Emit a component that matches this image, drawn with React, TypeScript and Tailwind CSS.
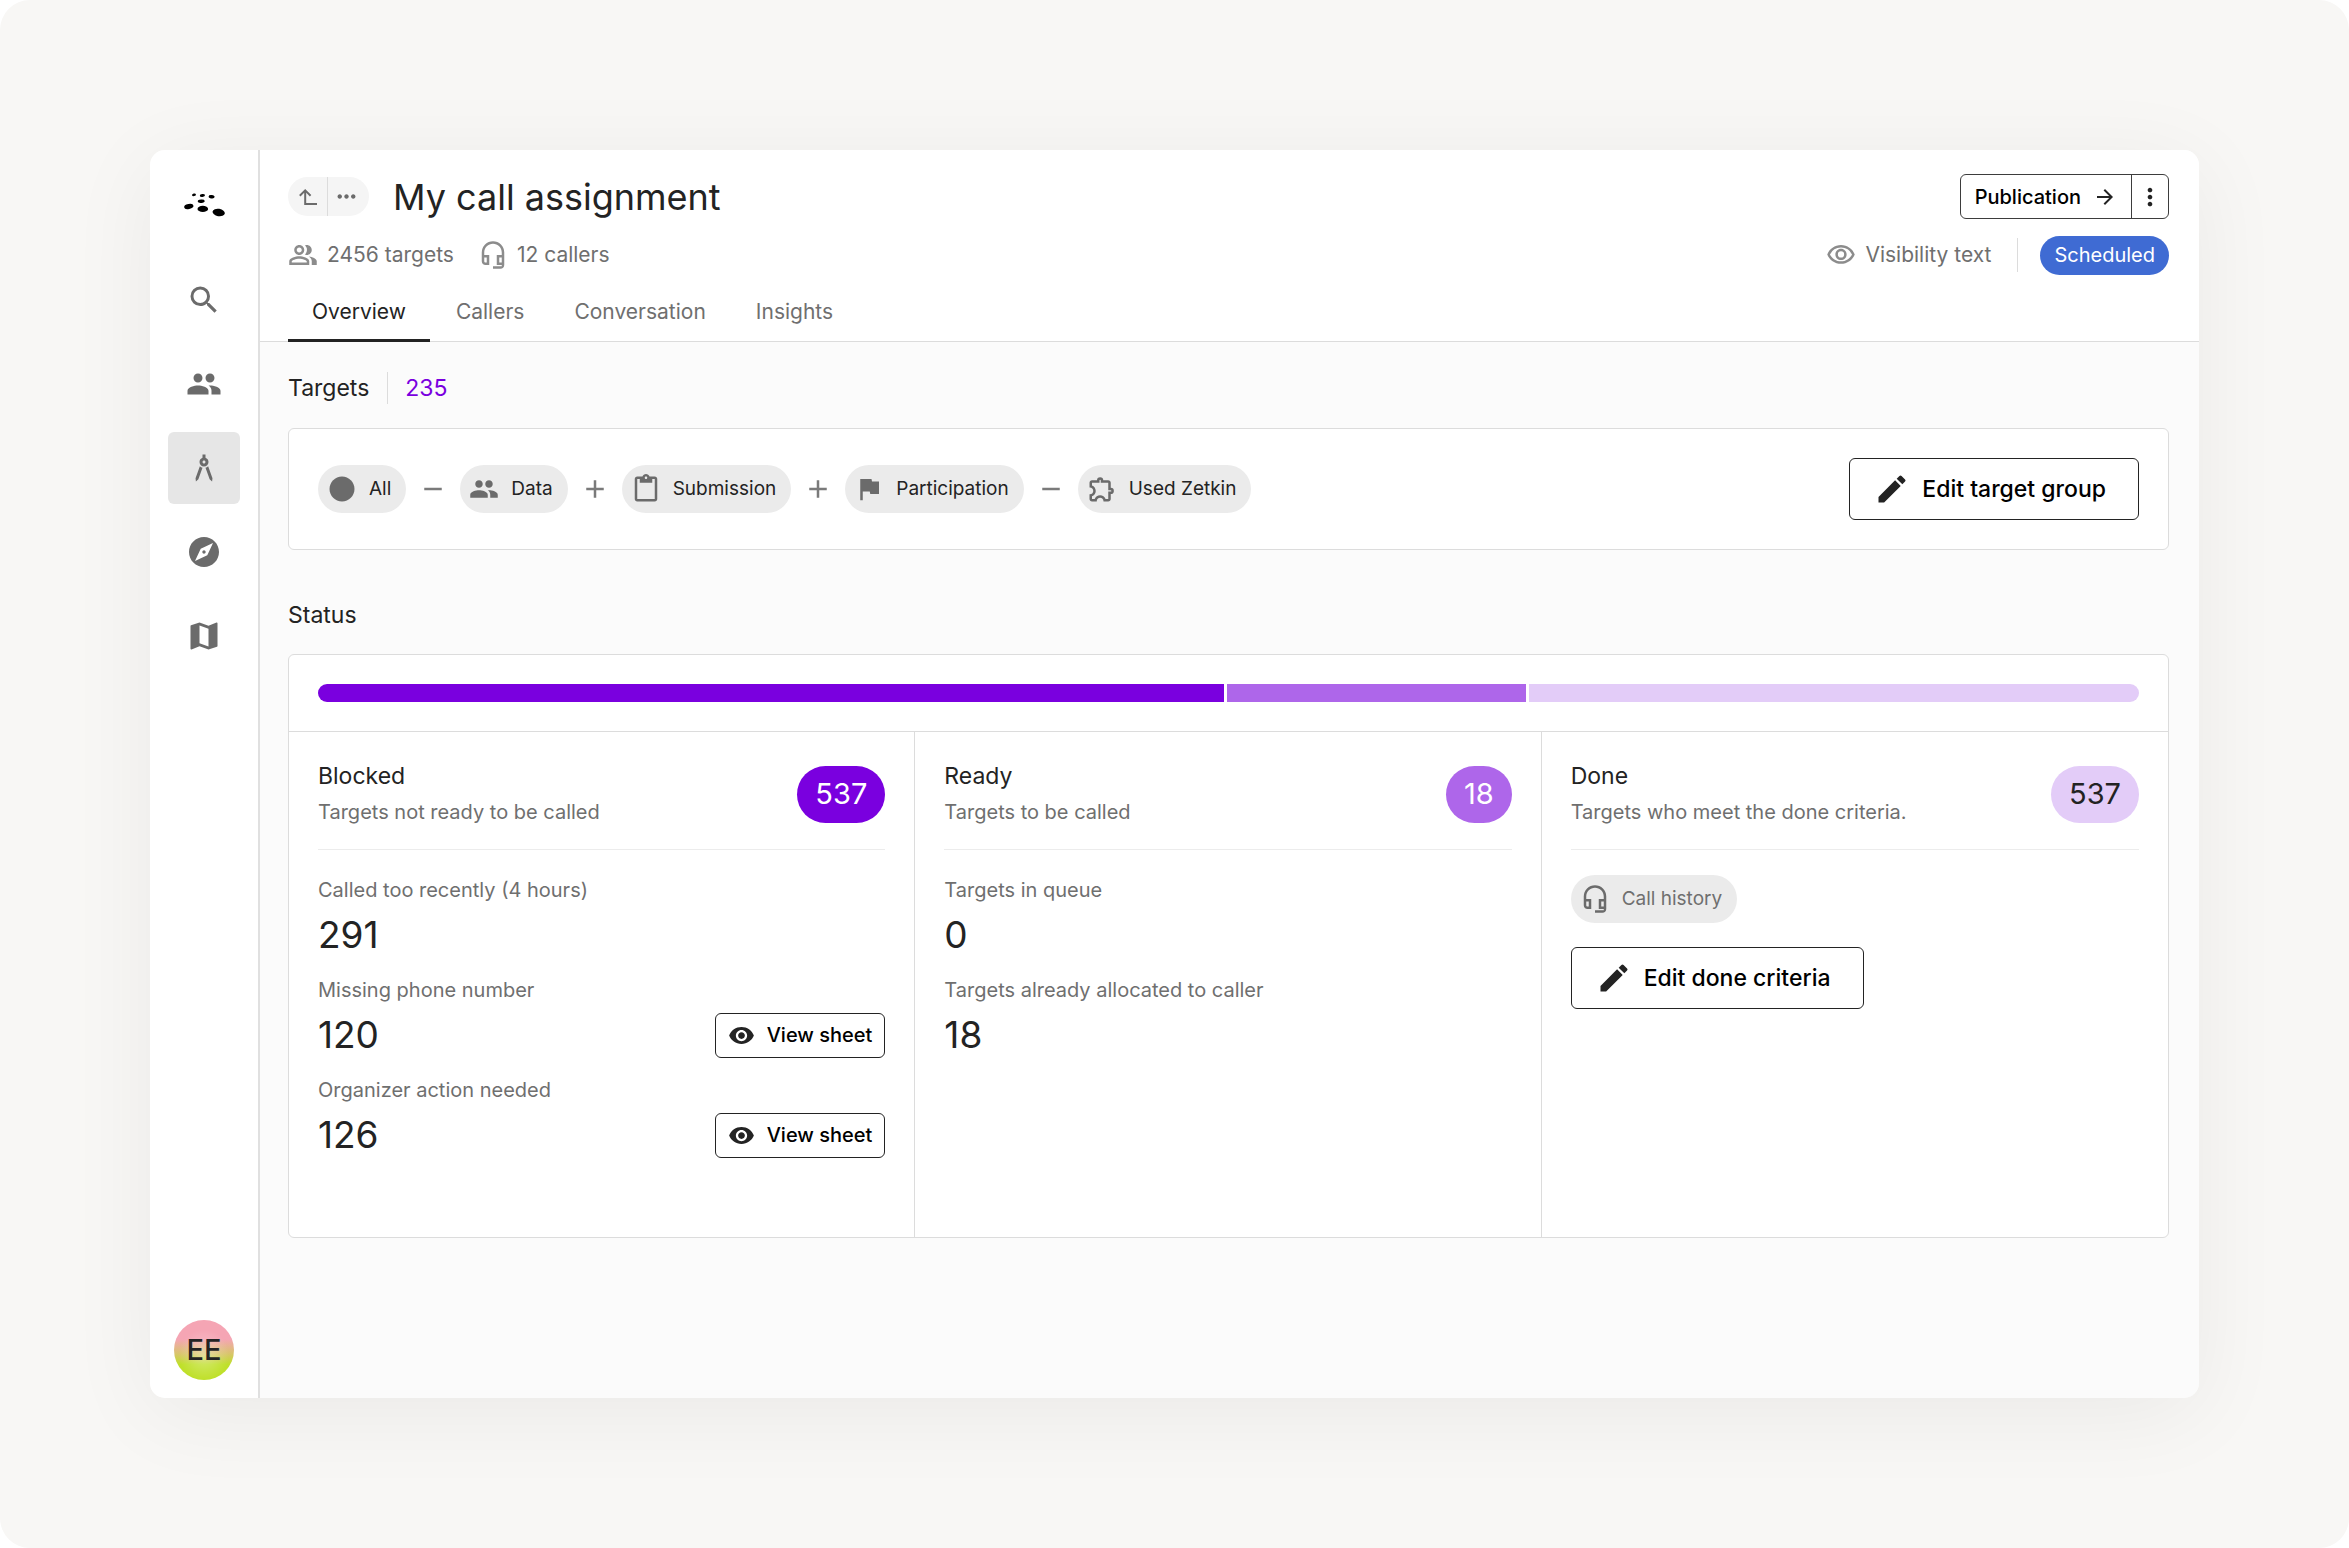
import type { ReactNode } from "react";
import type { IconType } from "react-icons";
import {
  MdAdd,
  MdArchitecture,
  MdArrowForward,
  MdCircle,
  MdContentPaste,
  MdEdit,
  MdExplore,
  MdFlag,
  MdMap,
  MdMoreHoriz,
  MdMoreVert,
  MdOutlineExtension,
  MdOutlineHeadsetMic,
  MdOutlinePeopleAlt,
  MdOutlineVisibility,
  MdPeople,
  MdRemove,
  MdSearch,
  MdVisibility,
} from "react-icons/md";

function Logo() {
  return (
    <svg viewBox="-1 0 42 26" className="h-[26px] w-[42px]" aria-hidden="true">
      <ellipse cx="10" cy="2.8" rx="2" ry="1.3" transform="rotate(-12 10 2.8)" />
      <ellipse cx="18.4" cy="3.5" rx="2.6" ry="1.4" transform="rotate(-4 18.4 3.5)" />
      <ellipse cx="27.6" cy="4.7" rx="3" ry="1.7" transform="rotate(6 27.6 4.7)" />
      <ellipse cx="17.2" cy="9.2" rx="3.5" ry="1.7" transform="rotate(-4 17.2 9.2)" />
      <ellipse cx="4.8" cy="14.5" rx="4.7" ry="2.5" transform="rotate(-12 4.8 14.5)" />
      <ellipse cx="18.8" cy="16.9" rx="5.3" ry="3.1" />
      <ellipse cx="34.7" cy="20.5" rx="6.2" ry="3.7" transform="rotate(10 34.7 20.5)" />
    </svg>
  );
}

function UpIcon() {
  return (
    <svg viewBox="0 0 20 18" className="h-[18px] w-5 fill-none stroke-current stroke-2" aria-hidden="true">
      <path d="M1.800 7.800 7.200 2.400l5.400 5.400M7.200 2.800V16H19" />
    </svg>
  );
}

const navItems: { label: string; Icon: IconType; active?: boolean }[] = [
  { label: "Search", Icon: MdSearch },
  { label: "People", Icon: MdPeople },
  { label: "Projects", Icon: MdArchitecture, active: true },
  { label: "Journeys", Icon: MdExplore },
  { label: "Areas", Icon: MdMap },
];

function Sidebar() {
  return (
    <aside className="flex w-27 shrink-0 flex-col items-center bg-white pt-[42px] pb-[18px]">
      <Logo />
      <nav className="mt-[46px] flex flex-col gap-3">
        {navItems.map(({ label, Icon, active }) => (
          <a
            key={label}
            href="#"
            aria-label={label}
            className={`flex size-18 items-center justify-center rounded-md text-[#6b6b6b] ${active ? "bg-[#e6e6e6]" : ""}`}
          >
            <Icon className="size-9" />
          </a>
        ))}
      </nav>
      <button
        aria-label="Account"
        className="mt-auto flex size-15 items-center justify-center rounded-full bg-[radial-gradient(circle_at_50%_58%,rgba(255,255,255,0.35),transparent_55%),linear-gradient(#f5a5b4_32%,#d9c46c_56%,#bfe02a_74%)] text-[29px] font-medium text-[#232323]"
      >
        EE
      </button>
    </aside>
  );
}

const tabs = ["Overview", "Callers", "Conversation", "Insights"];

function Header() {
  return (
    <header className="border-b border-[#dcdcdc] bg-white pt-6 pr-[30px] pl-7">
      <div className="flex h-[45px] items-center justify-between">
        <div className="flex items-center gap-6">
          <div className="flex h-[39px] overflow-hidden rounded-full bg-[#f5f5f5] text-[#6b6b6b]">
            <button aria-label="Up" className="flex w-10 items-center justify-center border-r border-[#dcdcdc]">
              <UpIcon />
            </button>
            <button aria-label="More levels" className="flex w-[41px] items-center justify-center pr-1">
              <MdMoreHoriz className="size-[27px]" />
            </button>
          </div>
          <h1 className="text-[36px] leading-none">My call assignment</h1>
        </div>
        <div className="flex h-[45px] rounded-md border border-[#3d3d3d] text-black">
          <button className="flex items-center gap-3 border-r border-[#3d3d3d] px-3.5 text-[20px] font-medium">
            Publication
            <MdArrowForward className="size-6 text-[#232323]" />
          </button>
          <button aria-label="More actions" className="flex w-9 items-center justify-center">
            <MdMoreVert className="size-7 text-[#232323]" />
          </button>
        </div>
      </div>
      <div className="mt-4 flex h-10 items-center justify-between text-[21px] text-[#6f6f6f]">
        <div className="flex items-center gap-6">
          <span className="flex items-center gap-[9px]">
            <MdOutlinePeopleAlt className="size-[30px] text-[#8c8c8c]" />
            2456 targets
          </span>
          <span className="flex items-center gap-[9px]">
            <MdOutlineHeadsetMic className="size-[30px] text-[#8c8c8c]" />
            12 callers
          </span>
        </div>
        <div className="flex items-center">
          <span className="flex items-center gap-[9px]">
            <MdOutlineVisibility className="size-[30px] text-[#8c8c8c]" />
            Visibility text
          </span>
          <span className="mr-[22px] ml-[26px] h-[34px] w-px bg-[#dcdcdc]" />
          <span className="flex h-[39px] items-center rounded-full bg-[#3f6bd3] px-3.5 text-[20px] text-white">Scheduled</span>
        </div>
      </div>
      <nav className="mt-2.5 -mb-px flex h-[57px] gap-0.5">
        {tabs.map((tab, i) => (
          <a
            key={tab}
            href="#"
            className={`flex items-center border-b-3 px-6 text-[21px] ${i === 0 ? "border-[#232323] text-[#232323]" : "border-transparent text-[#6f6f6f]"}`}
          >
            {tab}
          </a>
        ))}
      </nav>
    </header>
  );
}

function Chip({ Icon, muted, children }: { Icon: IconType; muted?: boolean; children: ReactNode }) {
  return (
    <span className="flex h-12 items-center gap-3 rounded-full bg-[#ebebeb] pr-[15px] pl-[9px] text-[19px]">
      <Icon className="size-[30px] text-[#6b6b6b]" />
      <span className={muted ? "text-[#6f6f6f]" : ""}>{children}</span>
    </span>
  );
}

function Operator({ Icon }: { Icon: IconType }) {
  return <Icon className="size-[30px] text-[#7a7a7a]" />;
}

function EditButton({ children }: { children: ReactNode }) {
  return (
    <button className="flex h-[62px] items-center gap-3 rounded-md border border-[#232323] bg-white pr-8 pl-6 text-[23px] font-medium text-black">
      <MdEdit className="size-9 text-[#232323]" />
      {children}
    </button>
  );
}

function TargetCard() {
  return (
    <div className="flex items-center justify-between rounded-md border border-[#dcdcdc] bg-white p-[29px]">
      <div className="flex items-center gap-3">
        <Chip Icon={MdCircle}>All</Chip>
        <Operator Icon={MdRemove} />
        <Chip Icon={MdPeople}>Data</Chip>
        <Operator Icon={MdAdd} />
        <Chip Icon={MdContentPaste}>Submission</Chip>
        <Operator Icon={MdAdd} />
        <Chip Icon={MdFlag}>Participation</Chip>
        <Operator Icon={MdRemove} />
        <Chip Icon={MdOutlineExtension}>Used Zetkin</Chip>
      </div>
      <EditButton>Edit target group</EditButton>
    </div>
  );
}

function Stat({ label, value, sheet }: { label: string; value: number; sheet?: boolean }) {
  return (
    <div>
      <p className="text-[20px] leading-[30px] text-[#6f6f6f]">{label}</p>
      <div className="flex h-15 items-center justify-between">
        <span className="text-[37px]">{value}</span>
        {sheet && (
          <button className="flex h-[45px] items-center gap-3 rounded-md border border-[#232323] px-3 text-[20px] font-medium text-black">
            <MdVisibility className="size-[27px] text-[#232323]" />
            View sheet
          </button>
        )}
      </div>
    </div>
  );
}

function Column({
  title,
  text,
  count,
  badge,
  children,
}: {
  title: string;
  text: string;
  count: number;
  badge: string;
  children: ReactNode;
}) {
  return (
    <section className="px-[29px] pt-[26px] pb-[72px]">
      <div className="flex items-center justify-between border-b border-[#ececec] pb-[19px]">
        <div>
          <h3 className="text-[23px] leading-9">{title}</h3>
          <p className="text-[20px] leading-9 text-[#6f6f6f]">{text}</p>
        </div>
        <span className={`flex h-[57px] items-center rounded-full px-[18px] text-[29px] ${badge}`}>{count}</span>
      </div>
      {children}
    </section>
  );
}

const segments = [
  { share: 906, color: "bg-[#7a00df]" },
  { share: 299, color: "bg-[#ae66ea]" },
  { share: 610, color: "bg-[#e3ccf8]" },
];

function StatusCard() {
  return (
    <div className="rounded-md border border-[#dcdcdc] bg-white">
      <div className="border-b border-[#dcdcdc] p-[29px]">
        <div className="flex h-[18px] gap-[3px] overflow-hidden rounded-full">
          {segments.map((s) => (
            <div key={s.color} className={s.color} style={{ flexGrow: s.share, flexBasis: 0 }} />
          ))}
        </div>
      </div>
      <div className="grid grid-cols-3 divide-x divide-[#dcdcdc]">
        <Column title="Blocked" text="Targets not ready to be called" count={537} badge="bg-[#7a00df] text-white">
          <div className="flex flex-col gap-2.5 pt-[25px]">
            <Stat label="Called too recently (4 hours)" value={291} />
            <Stat label="Missing phone number" value={120} sheet />
            <Stat label="Organizer action needed" value={126} sheet />
          </div>
        </Column>
        <Column title="Ready" text="Targets to be called" count={18} badge="bg-[#ae66ea] text-white">
          <div className="flex flex-col gap-2.5 pt-[25px]">
            <Stat label="Targets in queue" value={0} />
            <Stat label="Targets already allocated to caller" value={18} />
          </div>
        </Column>
        <Column title="Done" text="Targets who meet the done criteria." count={537} badge="bg-[#e3ccf8] text-[#232323]">
          <div className="flex flex-col items-start gap-6 pt-[25px]">
            <Chip Icon={MdOutlineHeadsetMic} muted>
              Call history
            </Chip>
            <EditButton>Edit done criteria</EditButton>
          </div>
        </Column>
      </div>
    </div>
  );
}

export default function App() {
  return (
    <div className="bg-white font-['Inter',sans-serif] text-[#232323]">
      <div className="flex min-h-screen rounded-[30px] bg-[#f8f7f5] p-[150px]">
        <div className="flex grow overflow-hidden rounded-[15px] shadow-[0_15px_90px_rgba(0,0,0,0.06)]">
          <Sidebar />
          <main className="flex grow flex-col border-l-2 border-[#e0e0e0] bg-[#fbfbfb]">
            <Header />
            <div className="pt-[30px] pr-[30px] pl-7">
              <div className="mb-6 flex h-8 items-center text-[23px]">
                <h2>Targets</h2>
                <span className="mr-[17px] ml-[18px] h-8 w-px bg-[#dcdcdc]" />
                <span className="text-[#7a00df]">235</span>
              </div>
              <TargetCard />
              <h2 className="mt-[49px] mb-[23px] text-[23px] leading-8">Status</h2>
              <StatusCard />
            </div>
          </main>
        </div>
      </div>
    </div>
  );
}
